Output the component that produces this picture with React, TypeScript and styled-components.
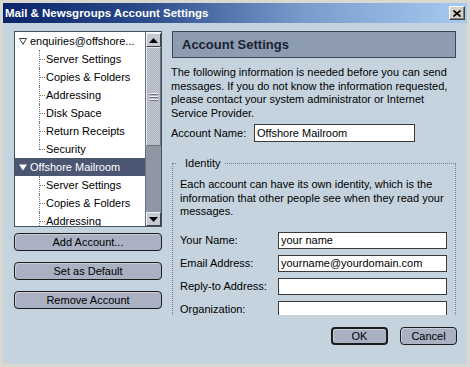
import React from 'react';
import styled, { createGlobalStyle } from 'styled-components';

const Global = createGlobalStyle`
  html, body { margin: 0; padding: 0; background: #c4d3dd; }
  body { font-family: "Liberation Sans", Arial, sans-serif; font-size: 11px; color: #000; }
  * { box-sizing: border-box; }
`;

const FONT = `"Liberation Sans", Arial, sans-serif`;

const Window = styled.div`
  width: 470px;
  height: 367px;
  border: 3px solid #d9d8d1;
  background: #c4d3dd;
  display: flex;
  flex-direction: column;
  overflow: hidden;
`;

const TitleBar = styled.div`
  height: 20px;
  flex: none;
  background: linear-gradient(to right, #0a246a 0%, #2a4a8a 30%, #7a9ccc 65%, #a6caf0 100%);
  display: flex;
  align-items: center;
  justify-content: space-between;
  padding: 0 2px 0 2px;
  color: #fff;
  font: bold 11.5px ${FONT};
`;

const CloseButton = styled.div`
  width: 16px;
  height: 14px;
  background: #d4d0c8;
  border: 1px solid;
  border-color: #ffffff #404040 #404040 #ffffff;
  box-shadow: inset -1px -1px #808080;
  display: flex;
  align-items: center;
  justify-content: center;
`;

const Body = styled.div`
  flex: 1;
  display: flex;
  gap: 9px;
  padding: 8px 10px 0 11px;
`;

const LeftCol = styled.div`
  width: 148px;
  display: flex;
  flex-direction: column;
`;

const Tree = styled.div`
  height: 196px;
  border: 1px solid #4a4f5c;
  background: #fff;
  display: flex;
`;

const TreeList = styled.div`
  flex: 1;
  overflow: hidden;
`;

const Row = styled.div<{ $selected?: boolean; $child?: boolean; $last?: boolean }>`
  position: relative;
  height: 18px;
  display: flex;
  align-items: center;
  white-space: nowrap;
  padding-left: ${p => (p.$child ? '31px' : '4px')};
  background: ${p => (p.$selected ? '#4b5673' : 'transparent')};
  color: ${p => (p.$selected ? '#fff' : '#000')};
  font: 11px ${FONT};

  ${p =>
    p.$child &&
    `
    &::before {
      content: '';
      position: absolute;
      left: 24px;
      top: 0;
      height: ${p.$last ? '9px' : '18px'};
      border-left: 1px dotted #7a7a7a;
    }
    &::after {
      content: '';
      position: absolute;
      left: 24px;
      top: 9px;
      width: 6px;
      border-top: 1px dotted #7a7a7a;
    }
  `}
`;

const Twisty = styled.svg`
  width: 8px;
  height: 7px;
  margin-right: 3px;
  flex: none;
`;

const Scrollbar = styled.div`
  width: 16px;
  flex: none;
  display: flex;
  flex-direction: column;
  border-left: 1px solid #6b7180;
  padding-top: 1px;
`;

const ScrollButton = styled.div`
  height: 14px;
  flex: none;
  background: #c6cad3;
  border: 1px solid;
  border-color: #eef0f4 #3c404a #3c404a #eef0f4;
  display: flex;
  align-items: center;
  justify-content: center;
`;

const Thumb = styled.div`
  height: 99px;
  flex: none;
  background-color: #b8bdc8;
  background-image: repeating-conic-gradient(#c6cad4 0 25%, #abb1bd 0 50%);
  background-size: 2px 2px;
  border: 1px solid;
  border-color: #e4e7ec #6d7382 #6d7382 #e4e7ec;
  display: flex;
  flex-direction: column;
  align-items: center;
  justify-content: center;
  gap: 2px;
`;

const Grip = styled.div`
  width: 8px;
  height: 1px;
  background: #f2f4f7;
  box-shadow: 0 1px #6d7382;
`;

const Track = styled.div`
  flex: 1;
  background-color: #8f96a4;
  background-image: repeating-conic-gradient(#969dab 0 25%, #878e9c 0 50%);
  background-size: 2px 2px;
`;

const LeftButtons = styled.div`
  display: flex;
  flex-direction: column;
  gap: 11px;
  margin-top: 6px;
`;

const PushButton = styled.button<{ $default?: boolean; $width?: number }>`
  height: 18px;
  width: ${p => (p.$width ? `${p.$width}px` : '100%')};
  border: ${p => (p.$default ? '2px' : '1px')} solid #1c1c1c;
  border-radius: 4px;
  background: #a9b1c2;
  box-shadow: inset 1px 1px #c9ced9;
  font: 11px ${FONT};
  color: #000;
  padding: 0;
  display: flex;
  align-items: center;
  justify-content: center;
`;

const RightCol = styled.div`
  width: 286px;
  display: flex;
  flex-direction: column;
`;

const Panel = styled.div`
  height: 284px;
  overflow: hidden;
`;

const Header = styled.div`
  height: 27px;
  margin: 0 1px;
  border: 1px solid #3d4556;
  background: #8d9cb1;
  padding-left: 9px;
  display: flex;
  align-items: center;
  font: bold 13px ${FONT};
  color: #1b2232;
`;

const Paragraph = styled.p<{ $top: number }>`
  margin: ${p => p.$top}px 0 0;
  line-height: 13.5px;
  font: 11px/13.5px ${FONT};
`;

const FormRow = styled.div`
  display: flex;
  align-items: center;
  height: 18px;
  margin-top: 4px;
`;

const Label = styled.span<{ $width: number }>`
  width: ${p => p.$width}px;
  flex: none;
  font: 11px ${FONT};
`;

const TextInput = styled.input<{ $height: number; $width?: number }>`
  height: ${p => p.$height}px;
  ${p => (p.$width ? `width: ${p.$width}px;` : 'flex: 1; min-width: 0;')}
  border: 1px solid #3a3a3a;
  background: #fff;
  font: 11px ${FONT};
  color: #000;
  padding: 0 2px;
  margin: 0;
  outline: none;
`;

const Fieldset = styled.fieldset`
  margin: 14px 1px 0;
  padding: 0 8px 40px 7px;
  border: 1px dotted #76818f;
  min-width: 0;
`;

const Legend = styled.legend`
  padding: 0 5px 0 8px;
  margin-left: -3px;
  font: 11px/14px ${FONT};
`;

const IdRows = styled.div`
  display: flex;
  flex-direction: column;
  gap: 6px;
  margin-top: 13px;
`;

const IdRow = styled.div`
  display: flex;
  align-items: center;
  height: 17px;
`;

const Footer = styled.div`
  display: flex;
  justify-content: flex-end;
  gap: 12px;
  margin-top: 12px;
`;

const DownTwisty = ({ filled }: { filled?: boolean }) => (
  <Twisty viewBox="0 0 8 7">
    {filled ? (
      <polygon points="0,0.5 8,0.5 4,6.5" fill="#fff" />
    ) : (
      <polygon points="0.5,0.5 7.5,0.5 4,6.3" fill="none" stroke="#404040" strokeWidth="1" />
    )}
  </Twisty>
);

const Arrow = ({ up }: { up?: boolean }) => (
  <svg width="9" height="5" viewBox="0 0 9 5">
    {up ? <polygon points="0,5 9,5 4.5,0" fill="#000" /> : <polygon points="0,0 9,0 4.5,5" fill="#000" />}
  </svg>
);

type Item = { label: string; kind: 'top' | 'child'; selected?: boolean; last?: boolean };

const items: Item[] = [
  { label: 'enquiries@offshore...', kind: 'top' },
  { label: 'Server Settings', kind: 'child' },
  { label: 'Copies & Folders', kind: 'child' },
  { label: 'Addressing', kind: 'child' },
  { label: 'Disk Space', kind: 'child' },
  { label: 'Return Receipts', kind: 'child' },
  { label: 'Security', kind: 'child', last: true },
  { label: 'Offshore Mailroom', kind: 'top', selected: true },
  { label: 'Server Settings', kind: 'child' },
  { label: 'Copies & Folders', kind: 'child' },
  { label: 'Addressing', kind: 'child' },
];

const identity = [
  { label: 'Your Name:', value: 'your name' },
  { label: 'Email Address:', value: 'yourname@yourdomain.com' },
  { label: 'Reply-to Address:', value: '' },
  { label: 'Organization:', value: '' },
];

export default function App() {
  return (
    <>
      <Global />
      <Window>
        <TitleBar>
          <span>Mail &amp; Newsgroups Account Settings</span>
          <CloseButton>
            <svg width="8" height="7" viewBox="0 0 8 7">
              <path d="M0.5 0.5 L7.5 6.5 M7.5 0.5 L0.5 6.5" stroke="#000" strokeWidth="1.6" />
            </svg>
          </CloseButton>
        </TitleBar>
        <Body>
          <LeftCol>
            <Tree>
              <TreeList>
                {items.map((it, i) => (
                  <Row key={i} $child={it.kind === 'child'} $selected={it.selected} $last={it.last}>
                    {it.kind === 'top' && <DownTwisty filled={it.selected} />}
                    {it.label}
                  </Row>
                ))}
              </TreeList>
              <Scrollbar>
                <ScrollButton>
                  <Arrow up />
                </ScrollButton>
                <Thumb>
                  <Grip />
                  <Grip />
                  <Grip />
                </Thumb>
                <Track />
                <ScrollButton>
                  <Arrow />
                </ScrollButton>
              </Scrollbar>
            </Tree>
            <LeftButtons>
              <PushButton>Add Account...</PushButton>
              <PushButton>Set as Default</PushButton>
              <PushButton>Remove Account</PushButton>
            </LeftButtons>
          </LeftCol>
          <RightCol>
            <Panel>
              <Header>Account Settings</Header>
              <Paragraph $top={8}>
                The following information is needed before you can send messages. If you do not know the
                information requested, please contact your system administrator or Internet Service Provider.
              </Paragraph>
              <FormRow>
                <Label $width={83}>Account Name:</Label>
                <TextInput $height={18} $width={161} readOnly value="Offshore Mailroom" />
              </FormRow>
              <Fieldset>
                <Legend>Identity</Legend>
                <Paragraph $top={8}>
                  Each account can have its own identity, which is the information that other people see when
                  they read your messages.
                </Paragraph>
                <IdRows>
                  {identity.map(f => (
                    <IdRow key={f.label}>
                      <Label $width={98}>{f.label}</Label>
                      <TextInput $height={17} readOnly value={f.value} />
                    </IdRow>
                  ))}
                </IdRows>
              </Fieldset>
            </Panel>
            <Footer>
              <PushButton $default $width={57}>OK</PushButton>
              <PushButton $width={57}>Cancel</PushButton>
            </Footer>
          </RightCol>
        </Body>
      </Window>
    </>
  );
}
